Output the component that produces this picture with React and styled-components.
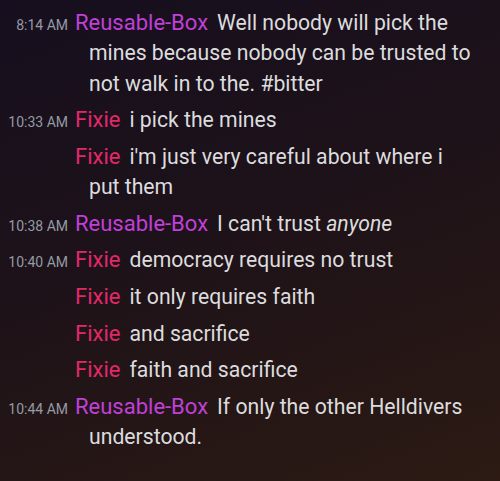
import React from "react";
import styled, { createGlobalStyle } from "styled-components";

const GlobalStyle = createGlobalStyle`
  html, body {
    margin: 0;
    padding: 0;
  }
  body {
    width: 500px;
    height: 481px;
    overflow: hidden;
    background: linear-gradient(160deg, #170f1f 0%, #1d1219 45%, #2c1a13 100%);
    font-family: "Roboto", "Noto Sans", sans-serif;
  }
`;

const users = {
  box: { name: "Reusable-Box", color: "#c040d8" },
  fixie: { name: "Fixie", color: "#e3286a" },
};

const messages = [
  {
    time: "8:14 AM",
    user: "box",
    text: "Well nobody will pick the mines because nobody can be trusted to not walk in to the. #bitter",
  },
  { time: "10:33 AM", user: "fixie", text: "i pick the mines" },
  { user: "fixie", text: "i'm just very careful about where i put them" },
  {
    time: "10:38 AM",
    user: "box",
    text: (
      <>
        I can't trust <em>anyone</em>
      </>
    ),
  },
  { time: "10:40 AM", user: "fixie", text: "democracy requires no trust" },
  { user: "fixie", text: "it only requires faith" },
  { user: "fixie", text: "and sacrifice" },
  { user: "fixie", text: "faith and sacrifice" },
  {
    time: "10:44 AM",
    user: "box",
    text: "If only the other Helldivers understood.",
  },
];

export default function App() {
  return (
    <>
      <GlobalStyle />
      <Log>
        {messages.map((m, i) => (
          <Row key={i}>
            <Time>{m.time}</Time>
            <Body>
              <Name $color={users[m.user].color}>{users[m.user].name}</Name>
              {m.text}
            </Body>
          </Row>
        ))}
      </Log>
    </>
  );
}

const Log = styled.div`
  display: flex;
  flex-direction: column;
  gap: 6.4px;
  padding: 8px 0 0 0;
`;

const Row = styled.div`
  display: grid;
  grid-template-columns: 68px 1fr;
  column-gap: 7px;
  align-items: baseline;
`;

const Time = styled.span`
  text-align: right;
  font-size: 14px;
  color: #949ba4;
  white-space: nowrap;
`;

const Body = styled.div`
  padding-left: 14px;
  text-indent: -14px;
  padding-right: 25px;
  font-size: 21.2px;
  line-height: 30.25px;
  color: #dcdcde;

  em {
    font-style: italic;
  }
`;

const Name = styled.span`
  color: ${(p) => p.$color};
  font-size: 22px;
  margin-right: 9px;
`;
